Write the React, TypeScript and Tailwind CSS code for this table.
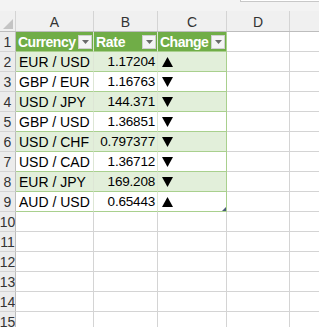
const rows = [
  { pair: "EUR / USD", rate: "1.17204", up: true },
  { pair: "GBP / EUR", rate: "1.16763", up: false },
  { pair: "USD / JPY", rate: "144.371", up: false },
  { pair: "GBP / USD", rate: "1.36851", up: false },
  { pair: "USD / CHF", rate: "0.797377", up: false },
  { pair: "USD / CAD", rate: "1.36712", up: false },
  { pair: "EUR / JPY", rate: "169.208", up: false },
  { pair: "AUD / USD", rate: "0.65443", up: true },
];

function Arrow({ up }: { up: boolean }) {
  return (
    <svg width="11" height="10" viewBox="0 0 11 10" className="block">
      {up ? <path d="M5.5 0 L11 10 L0 10 Z" fill="#000" /> : <path d="M0 0 L11 0 L5.5 10 Z" fill="#000" />}
    </svg>
  );
}

function FilterButton() {
  return (
    <div className="flex h-[14px] w-[14px] shrink-0 items-center justify-center border border-[#cfcfcf] bg-[#f4f4f4]">
      <svg width="7" height="4" viewBox="0 0 7 4">
        <path d="M0 0 L7 0 L3.5 4 Z" fill="#6a6a6a" />
      </svg>
    </div>
  );
}

function RowNum({ n }: { n: number }) {
  return (
    <div className="flex h-full w-[16px] shrink-0 items-center justify-center overflow-hidden border-r border-b border-r-[#bdbdbd] border-b-[#d4d4d4] bg-[#ececec] pt-[1px] text-[14px] text-[#333]">
      {n}
    </div>
  );
}

export default function App() {
  return (
    <div className="relative h-[327px] w-[319px] overflow-hidden bg-white font-['Liberation_Sans',Arial,sans-serif] text-[13px] leading-none text-black">
      {/* ribbon strip above the headers */}
      <div className="relative h-[11px] bg-[#f3f3f3]">
        <div className="absolute left-[240px] top-0 h-[2px] w-[79px] border-b border-l border-[#c8c8c8] bg-white" />
      </div>

      {/* column headers */}
      <div className="flex h-[21px] border-b border-[#bdbdbd] bg-[#f0f0f0] text-[14px] text-[#333]">
        <div className="flex w-[16px] shrink-0 items-end justify-end border-r border-[#d4d4d4] pb-[2px] pr-[2px]">
          <svg width="10" height="10" viewBox="0 0 10 10">
            <path d="M10 0 L10 10 L0 10 Z" fill="#c4c4c4" />
          </svg>
        </div>
        <div className="flex w-[78px] shrink-0 items-center justify-center border-r border-[#d4d4d4] pt-[2px]">A</div>
        <div className="flex w-[64px] shrink-0 items-center justify-center border-r border-[#d4d4d4] pt-[2px]">B</div>
        <div className="flex w-[69px] shrink-0 items-center justify-center border-r border-[#d4d4d4] pt-[2px]">C</div>
        <div className="flex w-[63px] shrink-0 items-center justify-center border-r border-[#d4d4d4] pt-[2px]">D</div>
        <div className="flex-1" />
      </div>

      {/* table header row */}
      <div className="flex h-[20px]">
        <RowNum n={1} />
        <div className="flex w-[78px] shrink-0 items-center justify-between border-r border-b border-r-[#d9e8cf] border-b-[#a9d08e] bg-[#70ad47] pl-[2px] pr-[1px] text-[14px] font-bold tracking-[-0.5px] text-white">
          <span className="pt-[1px]">Currency</span>
          <FilterButton />
        </div>
        <div className="flex w-[64px] shrink-0 items-center justify-between border-r border-b border-r-[#d9e8cf] border-b-[#a9d08e] bg-[#70ad47] pl-[2px] pr-[1px] text-[14px] font-bold tracking-[-0.3px] text-white">
          <span className="pt-[1px]">Rate</span>
          <FilterButton />
        </div>
        <div className="flex w-[69px] shrink-0 items-center justify-between border-r border-b border-r-[#a9d08e] border-b-[#a9d08e] bg-[#70ad47] pl-[2px] pr-[1px] text-[14px] font-bold tracking-[-0.5px] text-white">
          <span className="pt-[1px]">Change</span>
          <FilterButton />
        </div>
        <div className="w-[63px] shrink-0 border-r border-b border-[#d4d4d4]" />
        <div className="flex-1 border-b border-[#d4d4d4]" />
      </div>

      {/* data rows */}
      {rows.map((r, i) => {
        const band = i % 2 === 0 ? "bg-[#e2efda]" : "bg-white";
        return (
          <div key={r.pair} className="flex h-[20px]">
            <RowNum n={i + 2} />
            <div className={`flex w-[78px] shrink-0 items-center border-r border-b border-r-[#dde6d5] border-b-[#a9d08e] pl-[3px] pt-[1px] text-[14px] ${band}`}>
              {r.pair}
            </div>
            <div className={`flex w-[64px] shrink-0 items-center justify-end border-r border-b border-r-[#dde6d5] border-b-[#a9d08e] pr-[2px] pt-[1px] text-[13.5px] tracking-[-0.2px] ${band}`}>
              {r.rate}
            </div>
            <div className={`relative flex w-[69px] shrink-0 items-center border-r border-b border-[#a9d08e] pl-[4px] ${band}`}>
              <Arrow up={r.up} />
              {i === rows.length - 1 && (
                <div className="absolute bottom-0 right-0 h-[4px] w-[4px] bg-[#4a5a78] [clip-path:polygon(100%_0,100%_100%,0_100%)]" />
              )}
            </div>
            <div className="w-[63px] shrink-0 border-r border-b border-[#d4d4d4]" />
            <div className="flex-1 border-b border-[#d4d4d4]" />
          </div>
        );
      })}

      {/* empty rows */}
      {[10, 11, 12, 13, 14, 15].map((n) => (
        <div key={n} className="flex h-[20px]">
          <RowNum n={n} />
          <div className="w-[78px] shrink-0 border-r border-b border-[#d4d4d4]" />
          <div className="w-[64px] shrink-0 border-r border-b border-[#d4d4d4]" />
          <div className="w-[69px] shrink-0 border-r border-b border-[#d4d4d4]" />
          <div className="w-[63px] shrink-0 border-r border-b border-[#d4d4d4]" />
          <div className="flex-1 border-b border-[#d4d4d4]" />
        </div>
      ))}
    </div>
  );
}
